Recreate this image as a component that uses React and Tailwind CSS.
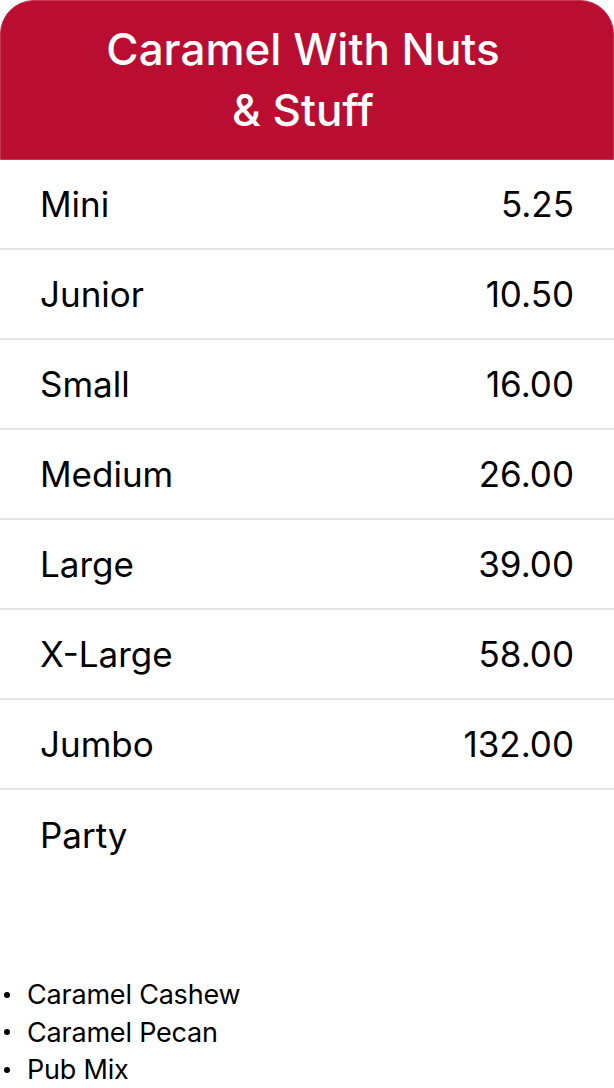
export default function App() {
  const rows = [
    ["Mini", "5.25"],
    ["Junior", "10.50"],
    ["Small", "16.00"],
    ["Medium", "26.00"],
    ["Large", "39.00"],
    ["X-Large", "58.00"],
    ["Jumbo", "132.00"],
    ["Party", ""],
  ];
  const items = ["Caramel Cashew", "Caramel Pecan", "Pub Mix"];
  return (
    <div className="w-[614px] min-h-[1088px] bg-white text-black" style={{ fontFamily: "Inter, 'Noto Sans', sans-serif" }}>
      <div className="h-[160px] bg-[#b90e31] border border-[#c53450] rounded-t-[34px] flex items-center justify-center">
        <h1 className="text-white text-[44px] leading-[61px] font-medium text-center pr-[8px]">
          Caramel With Nuts
          <br />& Stuff
        </h1>
      </div>
      <div>
        {rows.map(([name, price], i) => (
          <div
            key={name}
            className={`h-[90px] flex items-center justify-between pl-10 pr-10 text-[35px] ${i < rows.length - 1 ? "border-b-2 border-[#e5e5e5]" : ""}`}
          >
            <span>{name}</span>
            <span>{price}</span>
          </div>
        ))}
      </div>
      <ul className="mt-[96px] text-[27px] leading-[37.5px] tracking-[-0.2px]">
        {items.map((t) => (
          <li key={t} className="flex items-center">
            <span className="w-[27px] shrink-0 flex">
              <span className="ml-[4px] w-[6px] h-[6px] rounded-full bg-black"></span>
            </span>
            <span>{t}</span>
          </li>
        ))}
      </ul>
    </div>
  );
}
